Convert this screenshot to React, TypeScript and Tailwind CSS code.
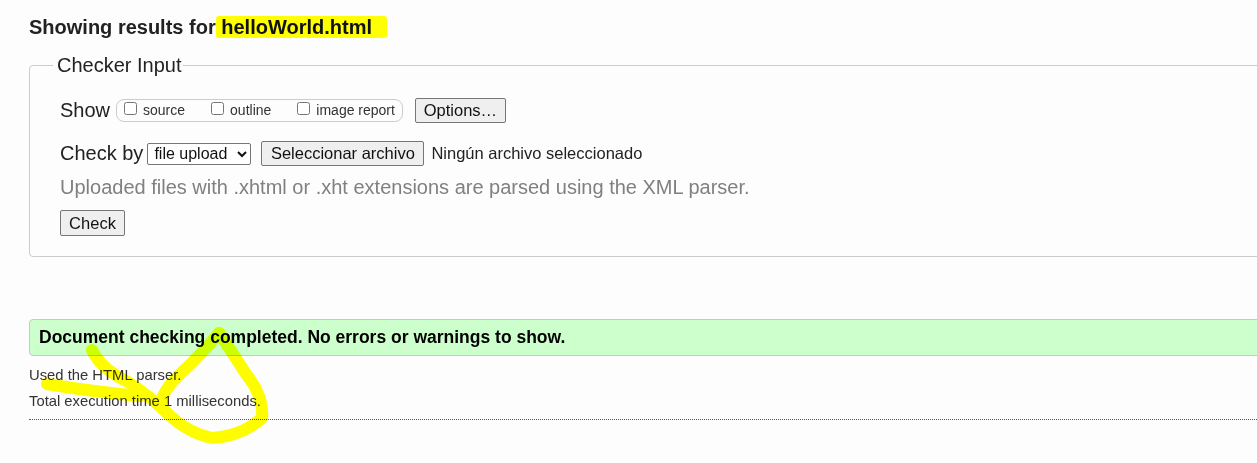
import React from "react";

export default function App() {
  return (
    <div className="relative w-[1257px] h-[463px] overflow-hidden bg-[#fdfdfd] font-['Liberation_Sans',Arial,sans-serif] text-[#222]">
      <div className="ml-[29px] w-[1300px] pt-[16px]">
        <h2 className="text-[20px] leading-[23px] font-bold text-[#222]">
          Showing results for{" "}
          <span className="bg-[#ffff00] ml-[-5px] pl-[5px] pr-[15px] py-[0px] rounded-[3px] text-[#111]">helloWorld.html</span>
        </h2>

        <fieldset className="mt-[15px] border border-[#cccccc] rounded-[4px] pl-[30px] pb-[20px]">
          <legend className="text-[20px] leading-[23px] ml-[-7px] pl-[4px] pr-[1px] text-[#222]">Checker Input</legend>

          <div className="mt-[21px] flex items-center h-[25px]">
            <span className="text-[20px] leading-[23px]">Show</span>
            <div className="ml-[6px] flex items-center h-[23px] border border-[#cccccc] rounded-[8px] pl-[7px] pr-[7px] text-[14px]">
              <input type="checkbox" className="w-[13px] h-[13px] m-0 mb-[4px]" />
              <span className="ml-[6px] text-[#333]">source</span>
              <input type="checkbox" className="ml-[26px] w-[13px] h-[13px] m-0 mb-[4px]" />
              <span className="ml-[6px] text-[#333]">outline</span>
              <input type="checkbox" className="ml-[26px] w-[13px] h-[13px] m-0 mb-[4px]" />
              <span className="ml-[6px] text-[#333]">image report</span>
            </div>
            <button className="ml-[12px] h-[25px] w-[91px] bg-[#efefef] border border-[#767676] rounded-[2px] text-[16.5px] leading-[19px] text-[#111]">
              Options…
            </button>
          </div>

          <div className="mt-[18px] flex items-center h-[25px]">
            <span className="text-[20px] leading-[23px]">Check by</span>
            <select className="ml-[4px] w-[104px] h-[22px] border border-[#767676] rounded-[2px] bg-white text-[16px] text-[#111] pl-[2px]" defaultValue="file">
              <option value="file">file upload</option>
            </select>
            <button className="ml-[10px] h-[25px] w-[163px] bg-[#efefef] border border-[#767676] rounded-[2px] text-[16.5px] leading-[19px] text-[#111]">
              Seleccionar archivo
            </button>
            <span className="ml-[7px] text-[16.5px] text-[#222]">Ningún archivo seleccionado</span>
          </div>

          <p className="mt-[10px] text-[20px] leading-[23px] text-[#808080]">
            Uploaded files with .xhtml or .xht extensions are parsed using the XML parser.
          </p>

          <button className="mt-[11px] h-[26px] w-[65px] bg-[#efefef] border border-[#767676] rounded-[2px] text-[16.5px] leading-[19px] text-[#111]">
            Check
          </button>
        </fieldset>

        <div className="mt-[62px] h-[37px] flex items-center border border-[#c8c8c8] rounded-[4px] bg-[#ccffcc] pl-[9px]">
          <span className="text-[17.5px] font-bold text-black">Document checking completed. No errors or warnings to show.</span>
        </div>

        <p className="mt-[6px] text-[14.8px] leading-[26px] text-[#333]">Used the HTML parser.</p>
        <p className="text-[14.8px] leading-[26px] text-[#333]">Total execution time 1 milliseconds.</p>
        <div className="mt-[5px] border-t border-dotted border-[#555]" />
      </div>

      <svg className="absolute left-0 top-0 pointer-events-none mix-blend-multiply" width="1257" height="463" viewBox="0 0 1257 463">
        <g fill="none" stroke="#ffff00" strokeWidth="12" strokeLinecap="round" strokeLinejoin="round">
          <path d="M92 350 Q100 368 128 382 Q150 396 168 414 Q188 433 212 438 Q242 436 262 418 Q264 396 246 374 Q232 352 219 333" />
          <path d="M219 333 Q200 356 178 376 Q162 392 162 402" />
          <path d="M47 384 Q95 392 140 396" />
        </g>
      </svg>
    </div>
  );
}
